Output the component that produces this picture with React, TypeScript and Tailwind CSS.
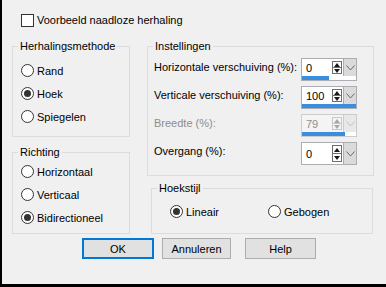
import type { ReactNode } from "react";

function Radio({ label, checked, className = "" }: { label: string; checked?: boolean; className?: string }) {
  return (
    <label className={`flex h-[23px] items-center gap-[3px] ${className}`}>
      <span className="flex h-[13px] w-[13px] shrink-0 items-center justify-center rounded-full border border-[#333333] bg-white">
        {checked && <span className="h-[7px] w-[7px] rounded-full bg-[#333333]" />}
      </span>
      <span>{label}</span>
    </label>
  );
}

function Group({ title, className, children }: { title: string; className: string; children: ReactNode }) {
  return (
    <fieldset className={`border border-[#dcdcdc] ${className}`}>
      <legend className="ml-[5px] px-[2px] leading-[16px]">{title}</legend>
      {children}
    </fieldset>
  );
}

function SpinBox({
  value,
  fill,
  disabled,
  bar = true,
}: {
  value: string;
  fill: number;
  disabled?: boolean;
  bar?: boolean;
}) {
  const arrow = disabled ? "#a8a8a8" : "#1a1a1a";
  return (
    <div
      className={`flex w-[56px] shrink-0 flex-col border ${
        disabled ? "border-[#cccccc] bg-[#f4f4f4]" : "border-[#abadb3] bg-white"
      }`}
    >
      <div className={`flex ${bar ? "h-[17px]" : "h-[21px]"}`}>
        <div className={`flex flex-1 items-center pl-[4px] ${disabled ? "text-[#8d8d8d]" : ""}`}>{value}</div>
        <div
          className={`my-[2px] flex w-[10px] flex-col border ${
            disabled ? "border-[#c8c8c8]" : "border-[#6d6d6d]"
          }`}
        >
          <div className="flex flex-1 items-center justify-center">
            <svg width="6" height="4" viewBox="0 0 6 4">
              <polygon points="3,0 6,4 0,4" fill={arrow} />
            </svg>
          </div>
          <div className={`h-px ${disabled ? "bg-[#c8c8c8]" : "bg-[#6d6d6d]"}`} />
          <div className="flex flex-1 items-center justify-center">
            <svg width="6" height="4" viewBox="0 0 6 4">
              <polygon points="0,0 6,0 3,4" fill={arrow} />
            </svg>
          </div>
        </div>
        <div
          className={`ml-[1px] flex w-[13px] items-center justify-center border-l ${
            disabled ? "border-[#cccccc] bg-[#e8e8e8]" : "border-[#adadad] bg-[#dadada]"
          }`}
        >
          <svg width="9" height="6" viewBox="0 0 9 6">
            <polyline
              points="0.5,0.5 4.5,5 8.5,0.5"
              fill="none"
              stroke={disabled ? "#c4c4c4" : "#6a6a6a"}
              strokeWidth="1"
            />
          </svg>
        </div>
      </div>
      {bar && (
        <div className="h-[4px] bg-white">
          <div className="h-full bg-[#3b8ddd]" style={{ width: `${fill}%` }} />
        </div>
      )}
    </div>
  );
}

function SettingRow({ label, children, disabled, className = "" }: { label: string; children: ReactNode; disabled?: boolean; className?: string }) {
  return (
    <div className={`flex items-start ${className}`}>
      <div className={`flex h-[18px] w-[153px] items-center pl-[6px] ${disabled ? "text-[#8d8d8d]" : ""}`}>{label}</div>
      {children}
    </div>
  );
}

function Button({ label, primary, className = "" }: { label: string; primary?: boolean; className?: string }) {
  return (
    <button
      className={`flex h-[21px] items-center justify-center bg-[#e1e1e1] ${
        primary ? "border-2 border-[#0078d7]" : "border border-[#adadad]"
      } ${className}`}
    >
      {label}
    </button>
  );
}

export default function App() {
  return (
    <div className="flex h-[287px] w-[386px] flex-col border-b-[3px] border-l-2 border-black bg-[#f0f0f0] pt-[12px] font-['Liberation_Sans',Arial,sans-serif] text-[11px] leading-[16px] text-black">
      <label className="flex h-[16px] items-center gap-[3px] pl-[19px]">
        <span className="h-[13px] w-[13px] border border-[#333333] bg-white" />
        <span>Voorbeeld naadloze herhaling</span>
      </label>

      <div className="mt-[10px] flex pl-[10px]">
        <div className="flex w-[118px] flex-col">
          <Group title="Herhalingsmethode" className="h-[99px]">
            <div className="pl-[8px] pt-[5px]">
              <Radio label="Rand" />
              <Radio label="Hoek" checked />
              <Radio label="Spiegelen" />
            </div>
          </Group>
          <Group title="Richting" className="mt-[7px] h-[90px]">
            <div className="pl-[8px]">
              <Radio label="Horizontaal" />
              <Radio label="Verticaal" />
              <Radio label="Bidirectioneel" checked />
            </div>
          </Group>
        </div>

        <div className="ml-[17px] flex w-[227px] flex-col">
          <Group title="Instellingen" className="h-[138px]">
            <div className="flex flex-col pt-[4px]">
              <SettingRow label="Horizontale verschuiving (%):">
                <SpinBox value="0" fill={50} />
              </SettingRow>
              <SettingRow label="Verticale verschuiving (%):" className="mt-[5px]">
                <SpinBox value="100" fill={100} />
              </SettingRow>
              <SettingRow label="Breedte (%):" disabled className="mt-[5px]">
                <SpinBox value="79" fill={79} disabled />
              </SettingRow>
              <SettingRow label="Overgang (%):" className="mt-[5px]">
                <SpinBox value="0" fill={0} bar={false} />
              </SettingRow>
            </div>
          </Group>
          <Group title="Hoekstijl" className="ml-[4px] mt-[4px] h-[54px] w-[222px]">
            <div className="flex pl-[18px] pt-[4px]">
              <Radio label="Lineair" checked className="w-[98px]" />
              <Radio label="Gebogen" />
            </div>
          </Group>
        </div>
      </div>

      <div className="mt-[4px] flex pl-[80px]">
        <Button label="OK" primary className="w-[72px]" />
        <Button label="Annuleren" className="ml-[8px] w-[69px]" />
        <Button label="Help" className="ml-[14px] w-[71px]" />
      </div>
    </div>
  );
}
